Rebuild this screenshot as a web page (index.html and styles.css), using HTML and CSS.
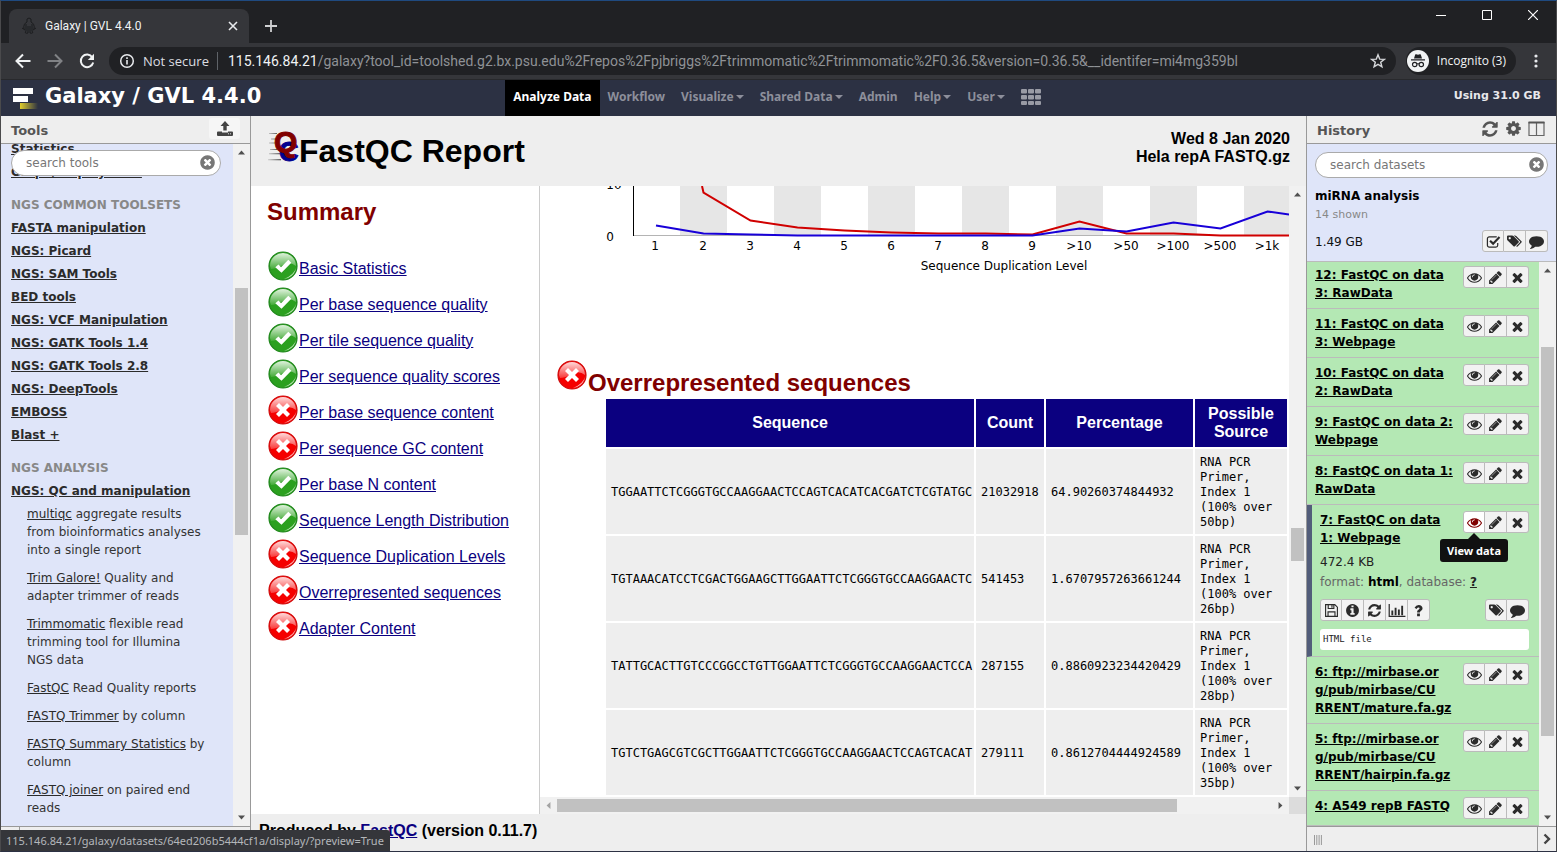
FILE: index.html
```html
<!DOCTYPE html>
<html lang="en">
<head>
<meta charset="utf-8">
<title>Galaxy | GVL 4.4.0</title>
<link rel="stylesheet" href="styles.css">
</head>
<body>
<svg class="sprite" aria-hidden="true">
  <symbol id="i-eye" viewBox="0 0 1792 1792"><path d="M1664 960q-152-236-381-353 61 104 61 225 0 185-131.5 316.5t-316.5 131.5-316.5-131.5-131.5-316.5q0-121 61-225-229 117-381 353 133 205 333.5 326.5t434.5 121.5 434.5-121.5 333.5-326.5zm-720-384q0-20-14-34t-34-14q-125 0-214.5 89.5t-89.5 214.5q0 20 14 34t34 14 34-14 14-34q0-86 61-147t147-61q20 0 34-14t14-34zm848 384q0 34-20 69-140 230-376.5 368.5t-499.5 138.5-499.5-139-376.5-368q-20-35-20-69t20-69q140-229 376.5-368t499.5-139 499.5 139 376.5 368q20 35 20 69z"/></symbol>
  <symbol id="i-pencil" viewBox="0 0 1792 1792"><path d="M491 1536l91-91-235-235-91 91v107h128v128h107zm523-928q0-22-22-22-10 0-17 7l-542 542q-7 7-7 17 0 22 22 22 10 0 17-7l542-542q7-7 7-17zm-54-192l416 416-832 832h-416v-416zm683 96q0 53-37 90l-166 166-416-416 166-165q36-38 90-38 53 0 91 38l235 234q37 39 37 91z"/></symbol>
  <symbol id="i-times" viewBox="0 0 1792 1792"><path d="M1490 1322q0 40-28 68l-136 136q-28 28-68 28t-68-28l-294-294-294 294q-28 28-68 28t-68-28l-136-136q-28-28-28-68t28-68l294-294-294-294q-28-28-28-68t28-68l136-136q28-28 68-28t68 28l294 294 294-294q28-28 68-28t68 28l136 136q28 28 28 68t-28 68l-294 294 294 294q28 28 28 68z"/></symbol>
  <symbol id="i-refresh" viewBox="0 0 1792 1792"><path d="M1639 1056q0 5-1 7-64 268-268 434.5t-478 166.5q-146 0-282.5-55t-243.5-157l-129 129q-19 19-45 19t-45-19-19-45v-448q0-26 19-45t45-19h448q26 0 45 19t19 45-19 45l-137 137q71 66 161 102t187 36q134 0 250-65t186-179q11-17 53-117 8-23 30-23h192q13 0 22.5 9.5t9.5 22.5zm25-800v448q0 26-19 45t-45 19h-448q-26 0-45-19t-19-45 19-45l138-138q-148-137-349-137-134 0-250 65t-186 179q-11 17-53 117-8 23-30 23h-199q-13 0-22.5-9.5t-9.5-22.5v-7q65-268 270-434.5t480-166.5q146 0 284 55.5t245 156.5l130-129q19-19 45-19t45 19 19 45z"/></symbol>
  <symbol id="i-cog" viewBox="0 0 1792 1792"><path d="M1152 896q0-106-75-181t-181-75-181 75-75 181 75 181 181 75 181-75 75-181zm512-109v222q0 12-8 23t-20 13l-185 28q-19 54-39 91 35 50 107 138 10 12 10 25t-9 23q-27 37-99 108t-94 71q-12 0-26-9l-138-108q-44 23-91 38-16 136-29 186-7 28-36 28h-222q-14 0-24.5-8.5t-11.5-21.5l-28-184q-49-16-90-37l-141 107q-10 9-25 9-14 0-25-11-126-114-165-168-7-10-7-23 0-12 8-23 15-21 51-66.5t54-70.5q-27-50-41-99l-183-27q-13-2-21-12.5t-8-23.5v-222q0-12 8-23t19-13l186-28q14-46 39-92-40-57-107-138-10-12-10-24 0-10 9-23 26-36 98.5-107.5t94.5-71.5q13 0 26 10l138 107q44-23 91-38 16-136 29-186 7-28 36-28h222q14 0 24.5 8.5t11.5 21.5l28 184q49 16 90 37l142-107q9-9 24-9 13 0 25 10 129 119 165 170 7 8 7 22 0 12-8 23-15 21-51 66.5t-54 70.5q26 50 41 98l183 28q13 2 21 12.5t8 23.5z"/></symbol>
  <symbol id="i-clear" viewBox="0 0 1792 1792"><path d="M1277 1122q0-26-19-45l-181-181 181-181q19-19 19-45 0-27-19-46l-90-90q-19-19-46-19-26 0-45 19l-181 181-181-181q-19-19-45-19-27 0-46 19l-90 90q-19 19-19 46 0 26 19 45l181 181-181 181q-19 19-19 45 0 27 19 46l90 90q19 19 46 19 26 0 45-19l181-181 181 181q19 19 45 19 27 0 46-19l90-90q19-19 19-46zm387-226q0 209-103 385.5t-279.5 279.5-385.5 103-385.5-103-279.5-279.5-103-385.5 103-385.5 279.5-279.5 385.5-103 385.5 103 279.5 279.5 103 385.5z"/></symbol>
  <symbol id="i-info" viewBox="0 0 1792 1792"><path d="M1152 1376v-160q0-14-9-23t-23-9h-96v-512q0-14-9-23t-23-9h-320q-14 0-23 9t-9 23v160q0 14 9 23t23 9h96v320h-96q-14 0-23 9t-9 23v160q0 14 9 23t23 9h448q14 0 23-9t9-23zm-128-896v-160q0-14-9-23t-23-9h-192q-14 0-23 9t-9 23v160q0 14 9 23t23 9h192q14 0 23-9t9-23zm640 416q0 209-103 385.5t-279.5 279.5-385.5 103-385.5-103-279.5-279.5-103-385.5 103-385.5 279.5-279.5 385.5-103 385.5 103 279.5 279.5 103 385.5z"/></symbol>
  <symbol id="i-comment" viewBox="0 0 1792 1792"><path d="M1792 896q0 174-120 321.5t-326 233-450 85.5q-70 0-145-8-198 175-460 242-49 14-114 22-17 2-30.5-9t-17.5-29v-1q-3-4-.5-12t2-10 4.5-9.5l6-9 7-8.5 8-9q7-8 31-34.5t34.5-38 31-39.5 32.5-51 27-59 26-76q-157-89-247.5-220t-90.5-281q0-174 120-321.5t326-233 450-85.5 450 85.5 326 233 120 321.5z"/></symbol>
  <symbol id="i-tags" viewBox="0 0 16 16"><path fill-rule="evenodd" d="M0 2.600Q0 1.500 1.100 1.500H5.500Q6.300 1.500 6.900 2.100L12.400 7.600Q13.100 8.300 12.400 9.100L8.400 13.100Q7.600 13.800 6.900 13.100L.7 6.900Q0 6.300 0 5.500zM2.900 3.200a1.200 1.200 0 1 0 .01 0z"/><path d="M7.300 1.500H8.400Q9.200 1.500 9.800 2.100L15.400 7.600Q16.100 8.300 15.400 9.100L11.300 13.200Q10.500 13.900 9.700 13L13.900 8.700Q14.300 8.300 13.900 7.900z"/></symbol>
  <symbol id="i-check" viewBox="0 0 16 16"><path d="M12.500 9.500V12a2 2 0 0 1-2 2H3.500a2 2 0 0 1-2-2V5a2 2 0 0 1 2-2h7q.6 0 1 .2" fill="none" stroke="currentColor" stroke-width="1.300"/><path d="M4.300 7.200L7.600 10.300L14.400 3.300" fill="none" stroke="currentColor" stroke-width="2.300"/></symbol>
  <symbol id="i-save" viewBox="0 0 16 16"><path d="M1.700 1.700H11.500L14.300 4.500V14.300H1.700zM4.300 14V9.500H11.700V14M4.500 2V5.900H10.500V2M8.500 2.500V5" fill="none" stroke="currentColor" stroke-width="1.200"/></symbol>
  <symbol id="i-chart" viewBox="0 0 18 16"><path d="M.7 1V14.300H18" fill="none" stroke="currentColor" stroke-width="1.300"/><path d="M3 8h2v5H3zM6.500 5h2v8h-2zM10 7h2v6h-2zM13.500 3h2v10h-2z"/></symbol>
  <symbol id="i-q" viewBox="0 0 16 16"><path d="M3.800 5Q5.200 2.200 8.200 2.200C10.600 2.200 12.300 3.700 12.300 5.700C12.300 7.300 11.400 8 10.200 8.700Q9.500 9.200 9.500 10H6.500C6.500 8.300 7.300 7.500 8.300 6.900C9.500 6.200 9.500 5 8.200 4.900C7.300 4.900 6.700 5.400 5.900 6.400zM6.500 11.300h3v2.800h-3z"/></symbol>
  <symbol id="i-up" viewBox="0 0 9 5"><path d="M0 5L4.500 0L9 5z"/></symbol>
  <symbol id="i-down" viewBox="0 0 9 5"><path d="M0 0L4.500 5L9 0z"/></symbol>
  <symbol id="i-left" viewBox="0 0 5 9"><path d="M5 0L0 4.500L5 9z"/></symbol>
  <symbol id="i-right" viewBox="0 0 5 9"><path d="M0 0L5 4.500L0 9z"/></symbol>
  <linearGradient id="g-ok" x1="0" y1="0" x2="0" y2="1"><stop offset="0" stop-color="#dff2dc"/><stop offset="1" stop-color="#45ab39"/></linearGradient>
  <linearGradient id="g-bad" x1="0" y1="0" x2="0" y2="1"><stop offset="0" stop-color="#ffd9d9"/><stop offset="1" stop-color="#f83a3a"/></linearGradient>
  <linearGradient id="g-logo"><stop offset="0" stop-color="#e0cd2c"/><stop offset="1" stop-color="#2c3143"/></linearGradient>
  <linearGradient id="g-speed" gradientUnits="userSpaceOnUse" x1="1" y1="0" x2="14" y2="0"><stop offset="0" stop-color="#ccc"/><stop offset="1" stop-color="#333"/></linearGradient>
  <symbol id="i-ok" viewBox="0 0 30 30"><circle cx="15" cy="15" r="14" fill="#2ba01f" stroke="#1f861b" stroke-width="1.200"/><path d="M2 15A13 13 0 0 1 28 15Q22 10 15 14Q8 18 3 18z" fill="url(#g-ok)"/><path d="M20 27Q27 24 28 17Q26 24 16 28z" fill="#b9e5b3"/><path d="M7.300 16.200L10.500 13.500L13 16.300L20.300 8.700L23.300 11.700L13.500 21.700z" fill="#fff"/></symbol>
  <symbol id="i-bad" viewBox="0 0 30 30"><circle cx="15" cy="15" r="14" fill="#f50000" stroke="#cf0b0b" stroke-width="1.200"/><path d="M2 15A13 13 0 0 1 28 15Q22 10 15 14Q8 18 3 18z" fill="url(#g-bad)"/><path d="M20 27Q27 24 28 17Q26 24 16 28z" fill="#ffb5b5"/><path d="M8 11L11 8L15 12L19 8L22 11L18 15L22 19L19 22L15 18L11 22L8 19L12 15z" fill="#fff"/></symbol>
</svg>

<div class="window">
  <div class="tabstrip">
    <div class="tab">
      <svg class="favicon" viewBox="0 0 16 18"><path d="M6 5Q5 1 8 1Q11 1 10 5M6 5Q2 7 3 12M10 5Q14 7 13 12M5 7V14M11 7V14M5 14Q3 17 7 16V9M11 14Q13 17 9 16V9M1 11L4 13M15 11L12 13" fill="none" stroke="#1b1c1e" stroke-width="1"/></svg>
      <span class="tab-title">Galaxy | GVL 4.4.0</span>
      <button class="plain" aria-label="Close tab"><svg width="10" height="10" viewBox="0 0 10 10"><path d="M1 1L9 9M9 1L1 9" stroke="#e8eaed" stroke-width="1.600"/></svg></button>
    </div>
    <button class="plain newtab" aria-label="New tab"><svg width="12" height="12" viewBox="0 0 12 12"><path d="M6 0V12M0 6H12" stroke="#cfd0d2" stroke-width="1.800"/></svg></button>
    <div class="winbtns">
      <button class="plain" aria-label="Minimize"><svg width="10" height="10" viewBox="0 0 10 10"><path d="M0 5.500H10" stroke="#fff"/></svg></button>
      <button class="plain" aria-label="Maximize"><svg width="10" height="10" viewBox="0 0 10 10"><path d="M.5 .5H9.500V9.500H.5z" fill="none" stroke="#fff"/></svg></button>
      <button class="plain" aria-label="Close"><svg width="10" height="10" viewBox="0 0 10 10"><path d="M0 0L10 10M10 0L0 10" stroke="#fff" stroke-width="1.200"/></svg></button>
    </div>
  </div>
  <div class="toolbar">
    <div class="navbtns">
      <button class="plain" aria-label="Back"><svg width="16" height="16" viewBox="0 0 16 16"><path d="M15.500 8H2.500M8 1.500L1.500 8L8 14.500" fill="none" stroke="#f1f3f4" stroke-width="2"/></svg></button>
      <button class="plain" aria-label="Forward"><svg width="16" height="16" viewBox="0 0 16 16"><path d="M.5 8H13.500M8 1.500L14.500 8L8 14.500" fill="none" stroke="#808285" stroke-width="2"/></svg></button>
      <button class="plain" aria-label="Reload"><svg width="16" height="16" viewBox="0 0 16 16"><path d="M13.300 4.300A6.300 6.300 0 1 0 14.200 9.500" fill="none" stroke="#f1f3f4" stroke-width="2"/><path d="M15 .8V7H8.800z" fill="#f1f3f4"/></svg></button>
    </div>
    <div class="address">
      <svg width="16" height="16" viewBox="0 0 16 16"><circle cx="8" cy="8" r="6.300" fill="none" stroke="#e8eaed" stroke-width="1.500"/><path d="M7.200 7h1.600v4.500H7.200zM7.200 4.300h1.600v1.600H7.200z" fill="#e8eaed"/></svg>
      <span class="notsecure">Not secure</span>
      <span class="url"><b>115.146.84.21</b>/galaxy?tool_id=toolshed.g2.bx.psu.edu%2Frepos%2Fpjbriggs%2Ftrimmomatic%2Ftrimmomatic%2F0.36.5&amp;version=0.36.5&amp;__identifer=mi4mg359bl</span>
      <button class="plain star" aria-label="Bookmark this page"><svg width="16" height="16" viewBox="0 0 16 16"><path d="M8 1.800L9.700 6.100L14.300 6.400L10.700 9.300L11.900 13.800L8 11.300L4.100 13.800L5.300 9.300L1.700 6.400L6.300 6.100z" fill="none" stroke="#d5d7da" stroke-width="1.400"/></svg></button>
    </div>
    <div class="incognito">
      <svg width="22" height="22" viewBox="0 0 22 22"><circle cx="11" cy="11" r="11" fill="#f1f3f4"/><path d="M7 8.500L8.200 4.600Q8.500 4 9.200 4.200L11 4.700L12.800 4.200Q13.500 4 13.800 4.600L15 8.500zM4 9.300H18V10.600H4z" fill="#202124"/><circle cx="7.700" cy="14.500" r="2.200" fill="none" stroke="#202124" stroke-width="1.200"/><circle cx="14.300" cy="14.500" r="2.200" fill="none" stroke="#202124" stroke-width="1.200"/><path d="M10 14Q11 13.300 12 14" fill="none" stroke="#202124"/></svg>
      <span>Incognito (3)</span>
    </div>
    <button class="plain menu" aria-label="Menu"><svg width="4" height="14" viewBox="0 0 4 14"><circle cx="2" cy="2" r="1.600" fill="#e8eaed"/><circle cx="2" cy="7" r="1.600" fill="#e8eaed"/><circle cx="2" cy="12" r="1.600" fill="#e8eaed"/></svg></button>
  </div>

  <header class="masthead">
    <a class="brand" href="#"><svg width="25" height="21" viewBox="0 0 25 21"><path d="M0 0H20V6H0zM0 8H15V14H0z" fill="#fff"/><path d="M7 15H25V21H7z" fill="url(#g-logo)"/></svg><span>Galaxy / GVL 4.4.0</span></a>
    <nav class="mainnav">
      <a class="active" href="#">Analyze Data</a>
      <a href="#">Workflow</a>
      <a class="drop" href="#">Visualize</a>
      <a class="drop" href="#">Shared Data</a>
      <a href="#">Admin</a>
      <a class="drop" href="#">Help</a>
      <a class="drop" href="#">User</a>
      <a href="#" aria-label="Applications"><svg width="20" height="16" viewBox="0 0 20 16"><path d="M1 0H5Q6 0 6 1V3.500Q6 4.500 5 4.500H1Q0 4.500 0 3.500V1Q0 0 1 0zM8 0H12Q13 0 13 1V3.500Q13 4.500 12 4.500H8Q7 4.500 7 3.500V1Q7 0 8 0zM15 0H19Q20 0 20 1V3.500Q20 4.500 19 4.500H15Q14 4.500 14 3.500V1Q14 0 15 0zM1 6H5Q6 6 6 7V9.500Q6 10.500 5 10.500H1Q0 10.500 0 9.500V7Q0 6 1 6zM8 6H12Q13 6 13 7V9.500Q13 10.500 12 10.500H8Q7 10.500 7 9.500V7Q7 6 8 6zM15 6H19Q20 6 20 7V9.500Q20 10.500 19 10.500H15Q14 10.500 14 9.500V7Q14 6 15 6zM1 12H5Q6 12 6 13V15Q6 16 5 16H1Q0 16 0 15V13Q0 12 1 12zM8 12H12Q13 12 13 13V15Q13 16 12 16H8Q7 16 7 15V13Q7 12 8 12zM15 12H19Q20 12 20 13V15Q20 16 19 16H15Q14 16 14 15V13Q14 12 15 12z" fill="#999ba5"/></svg></a>
    </nav>
    <div class="quota">Using 31.0 GB</div>
  </header>

  <div class="columns">
    <aside class="panel tools">
      <div class="panel-head"><h2>Tools</h2><button class="upload" aria-label="Upload data"><svg width="16" height="15" viewBox="0 0 16 15"><path d="M8 0L12.500 5H9.700V9.500H6.300V5H3.500zM1 10.500H5V11.500H11V10.500H15Q16 10.500 16 11.500V14Q16 15 15 15H1Q0 15 0 14V11.500Q0 10.500 1 10.500z" fill="#444"/><path d="M11 12.800h1M13 12.800h1" stroke="#ddd"/></svg></button></div>
      <div class="panel-body">
        <div class="tool-scroll">
          <div class="tool-list">
            <a class="cat" href="#">Statistics</a>
            <a class="cat" href="#">Graph/Display Data</a>
            <h3>NGS COMMON TOOLSETS</h3>
            <a class="cat" href="#">FASTA manipulation</a>
            <a class="cat" href="#">NGS: Picard</a>
            <a class="cat" href="#">NGS: SAM Tools</a>
            <a class="cat" href="#">BED tools</a>
            <a class="cat" href="#">NGS: VCF Manipulation</a>
            <a class="cat" href="#">NGS: GATK Tools 1.4</a>
            <a class="cat" href="#">NGS: GATK Tools 2.8</a>
            <a class="cat" href="#">NGS: DeepTools</a>
            <a class="cat" href="#">EMBOSS</a>
            <a class="cat" href="#">Blast +</a>
            <h3>NGS ANALYSIS</h3>
            <a class="cat" href="#">NGS: QC and manipulation</a>
            <div class="subtools">
              <p><a href="#">multiqc</a> aggregate results from bioinformatics analyses into a single report</p>
              <p><a href="#">Trim Galore!</a> Quality and adapter trimmer of reads</p>
              <p><a href="#">Trimmomatic</a> flexible read trimming tool for Illumina NGS data</p>
              <p><a href="#">FastQC</a> Read Quality reports</p>
              <p><a href="#">FASTQ Trimmer</a> by column</p>
              <p><a href="#">FASTQ Summary Statistics</a> by column</p>
              <p><a href="#">FASTQ joiner</a> on paired end reads</p>
            </div>
          </div>
        </div>
        <label class="search search-tools"><input type="text" placeholder="search tools" aria-label="search tools"><svg><use href="#i-clear"/></svg></label>
        <div class="sbar"><svg class="av"><use href="#i-up"/></svg><div class="track"><div class="thumb" style="top:19.6%;height:38.1%"></div></div><svg class="av"><use href="#i-down"/></svg></div>
      </div>
      <div class="panel-foot"><span class="foot-cell"></span></div>
    </aside>

    <main class="report">
      <header class="report-head">
        <svg class="qc" width="34" height="36" viewBox="0 0 34 36"><path d="M2 4h8v1H2zM4 9.500h5v1H4zM2 13.500h6v1H2zM3 20h7v1H3zM2 24.300h11v1H2zM1 30.300h13v1H1z" fill="url(#g-speed)"/><text x="12" y="32" class="qc-c">C</text><text x="7" y="23" class="qc-q">Q</text></svg>
        <h1>FastQC Report</h1>
        <div class="report-date">Wed 8 Jan 2020<br>Hela repA FASTQ.gz</div>
      </header>
      <div class="report-mid">
        <section class="summary">
          <h2>Summary</h2>
          <ul>
            <li><svg><use href="#i-ok"/></svg><a href="#">Basic Statistics</a></li>
            <li><svg><use href="#i-ok"/></svg><a href="#">Per base sequence quality</a></li>
            <li><svg><use href="#i-ok"/></svg><a href="#">Per tile sequence quality</a></li>
            <li><svg><use href="#i-ok"/></svg><a href="#">Per sequence quality scores</a></li>
            <li><svg><use href="#i-bad"/></svg><a href="#">Per base sequence content</a></li>
            <li><svg><use href="#i-bad"/></svg><a href="#">Per sequence GC content</a></li>
            <li><svg><use href="#i-ok"/></svg><a href="#">Per base N content</a></li>
            <li><svg><use href="#i-ok"/></svg><a href="#">Sequence Length Distribution</a></li>
            <li><svg><use href="#i-bad"/></svg><a href="#">Sequence Duplication Levels</a></li>
            <li><svg><use href="#i-bad"/></svg><a href="#">Overrepresented sequences</a></li>
            <li><svg><use href="#i-bad"/></svg><a href="#">Adapter Content</a></li>
          </ul>
        </section>
        <section class="modules">
          <div class="modules-view">
            <svg class="chart" width="749" height="94" viewBox="540 186 749 94">
              <path d="M680 186h47v50h-47zM774 186h47v50h-47zM868 186h47v50h-47zM962 186h47v50h-47zM1056 186h47v50h-47zM1150 186h47v50h-47zM1244 186h47v50h-47z" fill="#e6e6e6"/>
              <path d="M633.500 235.500H1289" stroke="#b4b4b4"/><path d="M633.500 186V236" stroke="#000"/>
              <path d="M702 186L703.500 192.500L750.500 220.500L797.500 227.500L844.500 230.500L891.500 232.500L938.500 233.500H985.500L1032.500 234.500L1079.500 221.500L1126.500 233.500H1173.500L1220.500 235.500H1289" class="line red"/>
              <path d="M656 225.500L703.500 233.500L750.500 234.500L797.500 235.500H1032.500L1079.500 228.500L1126.500 231.500L1173.500 222.500L1220.500 228.500L1267.500 211.500L1289 214.500" class="line blue"/>
              <g class="labels">
                <text x="614" y="189">10</text><text x="610" y="241">0</text>
                <text x="655" y="250">1</text><text x="703" y="250">2</text><text x="750" y="250">3</text><text x="797" y="250">4</text><text x="844" y="250">5</text><text x="891" y="250">6</text><text x="938" y="250">7</text><text x="985" y="250">8</text><text x="1032" y="250">9</text><text x="1079" y="250">&gt;10</text><text x="1126" y="250">&gt;50</text><text x="1173" y="250">&gt;100</text><text x="1220" y="250">&gt;500</text><text x="1267" y="250">&gt;1k</text>
                <text x="1004" y="270">Sequence Duplication Level</text>
              </g>
            </svg>
            <h2><svg><use href="#i-bad"/></svg><span>Overrepresented sequences</span></h2>
            <table>
              <colgroup><col class="c-seq"><col class="c-count"><col class="c-pct"><col class="c-src"></colgroup>
              <thead><tr><th>Sequence</th><th>Count</th><th>Percentage</th><th>Possible Source</th></tr></thead>
              <tbody>
                <tr><td>TGGAATTCTCGGGTGCCAAGGAACTCCAGTCACATCACGATCTCGTATGC</td><td>21032918</td><td>64.90260374844932</td><td>RNA PCR Primer, Index 1 (100% over 50bp)</td></tr>
                <tr><td>TGTAAACATCCTCGACTGGAAGCTTGGAATTCTCGGGTGCCAAGGAACTC</td><td>541453</td><td>1.6707957263661244</td><td>RNA PCR Primer, Index 1 (100% over 26bp)</td></tr>
                <tr><td>TATTGCACTTGTCCCGGCCTGTTGGAATTCTCGGGTGCCAAGGAACTCCA</td><td>287155</td><td>0.8860923234420429</td><td>RNA PCR Primer, Index 1 (100% over 28bp)</td></tr>
                <tr><td>TGTCTGAGCGTCGCTTGGAATTCTCGGGTGCCAAGGAACTCCAGTCACAT</td><td>279111</td><td>0.8612704444924589</td><td>RNA PCR Primer, Index 1 (100% over 35bp)</td></tr>
              </tbody>
            </table>
          </div>
          <div class="sbar"><svg class="av"><use href="#i-up"/></svg><div class="track"><div class="thumb" style="top:56.3%;height:5.8%"></div></div><svg class="av"><use href="#i-down"/></svg></div>
          <div class="sbar horiz"><svg class="ah dim"><use href="#i-left"/></svg><div class="track"><div class="thumb" style="left:0%;width:86.7%"></div></div><svg class="ah"><use href="#i-right"/></svg></div>
          <div class="corner"></div>
        </section>
      </div>
      <footer class="report-foot">Produced by <a href="#">FastQC</a> (version 0.11.7)</footer>
    </main>

    <aside class="panel history">
      <div class="panel-head"><h2>History</h2><div class="head-icons">
        <button class="plain" aria-label="Refresh history"><svg width="18" height="18"><use href="#i-refresh"/></svg></button>
        <button class="plain" aria-label="History options"><svg width="17" height="17"><use href="#i-cog"/></svg></button>
        <button class="plain" aria-label="View all histories"><svg width="17" height="16" viewBox="0 0 17 16"><path d="M1 1.500H16V14.500H1zM8.500 2V14" fill="none" stroke="#666" stroke-width="1.200"/><path d="M.5 1.500H16.500" stroke="#555" stroke-width="2"/></svg></button></div></div>
      <div class="history-info">
        <label class="search"><input type="text" placeholder="search datasets" aria-label="search datasets"><svg><use href="#i-clear"/></svg></label>
        <h3>miRNA analysis</h3>
        <p class="shown">14 shown</p>
        <div class="size-row"><span>1.49 GB</span><div class="btns"><button aria-label="Select datasets"><svg><use href="#i-check"/></svg></button><button aria-label="Edit tags"><svg><use href="#i-tags"/></svg></button><button aria-label="Edit annotation"><svg><use href="#i-comment"/></svg></button></div></div>
      </div>
      <div class="panel-body">
        <div class="datasets">
          <div class="datasets-list">
            <article><a href="#">12: FastQC on data 3: RawData</a><div class="btns"><button aria-label="View data"><svg><use href="#i-eye"/></svg></button><button aria-label="Edit attributes"><svg><use href="#i-pencil"/></svg></button><button aria-label="Delete"><svg><use href="#i-times"/></svg></button></div></article>
            <article><a href="#">11: FastQC on data 3: Webpage</a><div class="btns"><button aria-label="View data"><svg><use href="#i-eye"/></svg></button><button aria-label="Edit attributes"><svg><use href="#i-pencil"/></svg></button><button aria-label="Delete"><svg><use href="#i-times"/></svg></button></div></article>
            <article><a href="#">10: FastQC on data 2: RawData</a><div class="btns"><button aria-label="View data"><svg><use href="#i-eye"/></svg></button><button aria-label="Edit attributes"><svg><use href="#i-pencil"/></svg></button><button aria-label="Delete"><svg><use href="#i-times"/></svg></button></div></article>
            <article><a href="#">9: FastQC on data 2: Webpage</a><div class="btns"><button aria-label="View data"><svg><use href="#i-eye"/></svg></button><button aria-label="Edit attributes"><svg><use href="#i-pencil"/></svg></button><button aria-label="Delete"><svg><use href="#i-times"/></svg></button></div></article>
            <article><a href="#">8: FastQC on data 1: RawData</a><div class="btns"><button aria-label="View data"><svg><use href="#i-eye"/></svg></button><button aria-label="Edit attributes"><svg><use href="#i-pencil"/></svg></button><button aria-label="Delete"><svg><use href="#i-times"/></svg></button></div></article>
            <article class="open"><a href="#">7: FastQC on data 1: Webpage</a><div class="btns"><button class="hot" aria-label="View data"><svg><use href="#i-eye"/></svg><span class="tip">View data</span></button><button aria-label="Edit attributes"><svg><use href="#i-pencil"/></svg></button><button aria-label="Delete"><svg><use href="#i-times"/></svg></button></div>
              <div class="details">
                <p class="kb">472.4 KB</p>
                <p class="fmt">format: <b>html</b>, database: <a href="#">?</a></p>
                <div class="actions"><div class="btns"><button aria-label="Download"><svg><use href="#i-save"/></svg></button><button aria-label="View details"><svg><use href="#i-info"/></svg></button><button aria-label="Run this job again"><svg><use href="#i-refresh"/></svg></button><button aria-label="Visualize"><svg class="wide"><use href="#i-chart"/></svg></button><button aria-label="Help"><svg><use href="#i-q"/></svg></button></div><div class="btns"><button aria-label="Edit tags"><svg><use href="#i-tags"/></svg></button><button aria-label="Edit annotation"><svg><use href="#i-comment"/></svg></button></div></div>
                <pre>HTML file</pre>
              </div>
            </article>
            <article><a href="#">6: ftp://mirbase.or<wbr>g/pub/mirbase/CU<wbr>RRENT/mature.fa.gz</a><div class="btns"><button aria-label="View data"><svg><use href="#i-eye"/></svg></button><button aria-label="Edit attributes"><svg><use href="#i-pencil"/></svg></button><button aria-label="Delete"><svg><use href="#i-times"/></svg></button></div></article>
            <article><a href="#">5: ftp://mirbase.or<wbr>g/pub/mirbase/CU<wbr>RRENT/hairpin.fa.gz</a><div class="btns"><button aria-label="View data"><svg><use href="#i-eye"/></svg></button><button aria-label="Edit attributes"><svg><use href="#i-pencil"/></svg></button><button aria-label="Delete"><svg><use href="#i-times"/></svg></button></div></article>
            <article><a href="#">4: A549 repB FASTQ</a><div class="btns"><button aria-label="View data"><svg><use href="#i-eye"/></svg></button><button aria-label="Edit attributes"><svg><use href="#i-pencil"/></svg></button><button aria-label="Delete"><svg><use href="#i-times"/></svg></button></div></article>
          </div>
        </div>
        <div class="sbar"><svg class="av"><use href="#i-up"/></svg><div class="track"><div class="thumb" style="top:12.8%;height:73.4%"></div></div><svg class="av"><use href="#i-down"/></svg></div>
      </div>
      <div class="panel-foot"><svg class="grip" width="8" height="10" viewBox="0 0 8 10"><path d="M.5 0V10M2.800 0V10M5.100 0V10M7.400 0V10" stroke="#999"/></svg><button class="collapse" aria-label="Collapse panel"><svg width="8" height="12" viewBox="0 0 8 12"><path d="M1.500 1.500L6 6L1.500 10.500" fill="none" stroke="#444" stroke-width="2.400"/></svg></button></div>
    </aside>
  </div>
  <div class="status">115.146.84.21/galaxy/datasets/64ed206b5444cf1a/display/?preview=True</div>
</div>
</body>
</html>
```

FILE: styles.css
```css
* { box-sizing: border-box; }
body { margin: 0; font: 12px/18px "DejaVu Sans", Verdana, sans-serif; color: #333; }
h1, h2, h3, p, ul, pre { margin: 0; padding: 0; }
ul { list-style: none; }
button { font: inherit; color: inherit; padding: 0; cursor: pointer; }
svg { display: block; fill: currentColor; }
.sprite { position: absolute; width: 0; height: 0; }
.plain { display: grid; place-items: center; border: 0; background: none; }

.window { position: relative; display: flex; flex-direction: column; height: 100vh; overflow: hidden; border: 1px solid #4a4a4c; border-top-color: #1f4a80; border-bottom-color: #2c3143; background: #35363a; }

/* browser chrome */
.tabstrip { display: flex; height: 42px; flex: none; padding: 8px 0 0 8px; background: #202124; }
.tab { display: flex; align-items: center; width: 240px; padding: 0 11px 0 12px; border-radius: 8px 8px 0 0; background: #35363a; }
.favicon { width: 16px; height: 18px; margin-right: 8px; }
.tab-title { flex: 1; font: 12px/16px Roboto, sans-serif; color: #f1f3f4; }
.newtab { width: 44px; }
.winbtns { display: flex; align-items: flex-start; margin-left: auto; }
.winbtns button { width: 46px; height: 12px; }
.toolbar { display: flex; align-items: center; height: 37px; flex: none; border-bottom: 1px solid #28292c; font: 12px/16px "Open Sans", sans-serif; color: #f1f3f4; }
.navbtns { display: flex; gap: 16px; padding: 0 14px; }
.address { display: flex; flex: 1; align-items: center; min-width: 0; height: 28px; padding: 0 10px; border-radius: 14px; background: #202124; font-size: 14px; line-height: 18px; white-space: nowrap; }
.notsecure { margin-left: 8px; padding-right: 8px; border-right: 1px solid #5f6368; color: #dcdee1; font-size: 13px; }
.url { flex: 1; margin-left: 10px; overflow: hidden; color: #8f9296; font: 14px/18px Roboto, sans-serif; }
.url b { font-weight: 400; color: #f1f3f4; }
.incognito { display: flex; align-items: center; gap: 8px; height: 28px; margin-left: 10px; padding: 0 10px 0 1px; border-radius: 14px; background: #202124; white-space: nowrap; }
.menu { width: 40px; height: 28px; }

/* masthead */
.masthead { display: flex; align-items: stretch; height: 36px; flex: none; background: #2c3143; }
.brand { display: flex; flex: 1; align-items: center; gap: 7px; padding: 0 0 4px 12px; color: #fff; font-size: 21px; font-weight: 700; text-decoration: none; white-space: nowrap; }
.brand svg { margin-top: 4px; }
.mainnav { display: flex; font: bold 12px/18px "Noto Sans", sans-serif; }
.mainnav a { display: flex; align-items: center; padding: 0 8px 2px; color: #8d8f9b; text-decoration: none; white-space: nowrap; }
.mainnav .active { background: #000; color: #fff; }
.drop::after { content: ""; margin-left: 2px; border: 4px solid transparent; border-top-color: #8d8f9b; border-bottom: 0; }
.quota { flex: 1; padding: 7px 15px 0 0; text-align: right; color: #e8e8ec; font-size: 11px; font-weight: 700; }

/* panels */
.columns { display: flex; flex: 1; min-height: 0; }
.panel { display: flex; flex: none; flex-direction: column; width: 250px; background: #dfe5f9; }
.tools { border-right: 1px solid #999; }
.history { border-left: 1px solid #999; }
.panel-head { display: flex; flex: none; align-items: center; height: 28px; padding-left: 10px; border-bottom: 1px solid #999; background: #eee; color: #555; }
.panel-head h2 { flex: 1; padding-top: 2px; font-size: 13px; line-height: 18px; }
.upload { display: grid; place-items: center; width: 31px; height: 21px; margin: 0 10px 3px 0; border: 0; border-radius: 3px; background: #f6f6f6; }
.head-icons { display: flex; align-items: center; gap: 6px; padding: 0 11px 2px 0; }
.panel-body { position: relative; display: flex; flex: 1; min-height: 0; }
.panel-foot { display: flex; flex: none; height: 25px; border-top: 1px solid #999; background: #eee; }
.foot-cell { width: 19px; border-right: 1px solid #999; }
.grip { margin: 8px auto 0 7px; }
.collapse { display: grid; place-items: center; width: 19px; border: 0; border-left: 1px solid #999; background: none; }

.search { position: relative; display: block; }
.search input { display: block; width: 100%; height: 26px; padding: 0 24px 0 14px; border: 1px solid #aaa; border-radius: 13px; background: #fff; color: #333; font: 12px/18px "DejaVu Sans", Verdana, sans-serif; outline: 0; }
.search input::placeholder { color: #777; opacity: 1; }
.search svg { position: absolute; top: 4px; right: 3px; width: 17px; height: 17px; color: #777; }
.search-tools { position: absolute; top: 6px; left: 10px; right: 29px; }
.search-tools svg { right: 5px; }

.tool-scroll { flex: 1; min-width: 0; overflow: hidden; }
.tool-list { margin-top: -6px; padding: 0 18px 0 10px; }
.tool-list a { color: #2b2b2b; }
.tool-list h3 { margin: 12px 0 3px; color: #888; font-size: 12px; line-height: 18px; }
.cat { display: block; font-weight: 700; line-height: 23px; }
.subtools { padding: 2px 8px 0 16px; }
.subtools p { margin-bottom: 10px; }

/* scroll bars */
.sbar { display: flex; flex: none; flex-direction: column; align-items: center; width: 17px; background: #f1f1f1; color: #505050; }
.av { width: 17px; height: 17px; padding: 6px 5px; }
.ah { width: 17px; height: 17px; padding: 5px 6px; }
.dim { color: #a3a3a3; }
.track { position: relative; flex: 1; align-self: stretch; }
.thumb { position: absolute; left: 2px; right: 2px; background: #c1c1c1; }
.horiz { flex-direction: row; width: auto; height: 17px; }
.horiz .thumb { top: 2px; bottom: 2px; right: auto; }
.corner { background: #dcdcdc; }

/* report */
.report { display: flex; flex: 1; flex-direction: column; min-width: 0; background: #fff; color: #000; font: 16px/18px "Liberation Sans", Arial, sans-serif; }
.report a { color: #0b0080; }
.report-head { display: flex; flex: none; height: 70px; padding: 0 16px; background: #eee; }
.qc { margin-top: 13px; margin-right: -2px; overflow: visible; }
.qc-q, .qc-c { font: bold 30px "Liberation Sans", Arial, sans-serif; stroke-width: 1; }
.qc-q { fill: #800000; stroke: #800000; }
.qc-c { fill: #000090; stroke: #000090; font-size: 27px; }
.report-head h1 { flex: 1; font-size: 32px; line-height: 36px; padding-top: 17px; }
.report-date { padding-top: 14px; font-weight: 700; text-align: right; }
.report-mid { display: flex; flex: 1; min-height: 0; }
.summary { flex: none; width: 289px; padding: 12px 0 0 16px; border-right: 1px solid #ccc; }
.summary h2, .modules h2 { color: #800000; font-size: 24px; line-height: 28px; }
.summary ul { margin-top: 22px; }
.summary li { display: flex; align-items: center; height: 36px; }
.summary li svg, .modules h2 svg { flex: none; width: 32px; height: 30px; }
.summary li a { padding-top: 6px; }
.modules { display: grid; flex: 1; grid-template: minmax(0, 1fr) 17px / minmax(0, 1fr) 17px; min-width: 0; }
.modules-view { overflow: hidden; }
.line { fill: none; stroke-width: 2; }
.red { stroke: #d00000; }
.blue { stroke: #1800d8; }
.labels { fill: #000; font: 12px "DejaVu Sans", sans-serif; text-anchor: middle; }
.modules h2 { display: flex; height: 37px; margin: 80px 0 0 16px; }
.modules h2 span { padding-top: 9px; }
.modules table { width: 685px; margin-left: 64px; border-spacing: 2px; table-layout: fixed; }
.c-seq { width: 368px; }
.c-count { width: 68px; }
.c-pct { width: 147px; }
.c-src { width: 92px; }
.modules th { padding: 6px; background: #0b0080; color: #fff; }
.modules td { padding: 6px 0 4px 5px; background: #eee; font: 12px/15px "DejaVu Sans Mono", monospace; }
.report-foot { flex: none; height: 37px; padding: 8px; background: #eee; font-weight: 700; }

/* history */
.history-info { flex: none; height: 118px; padding: 8px; border-bottom: 1px solid #bbb; color: #111; }
.history-info h3 { margin-top: 9px; font-size: 12px; line-height: 18px; color: #000; }
.shown { margin-top: 1px; color: #888; font-size: 11px; }
.size-row { display: flex; align-items: center; justify-content: space-between; height: 22px; margin-top: 6px; }
.size-row span { padding-top: 2px; }
.btns { display: flex; flex: none; height: 22px; }
.btns button { position: relative; display: grid; place-items: center; width: 22px; height: 22px; border: 1px solid #bbb; border-left: 0; background: #f2f2f2; color: #2b2b2b; }
.btns button:first-child { border-left: 1px solid #bbb; border-radius: 3px 0 0 3px; }
.btns button:last-child { border-radius: 0 3px 3px 0; }
.btns svg { width: 15px; height: 15px; }
.btns .wide { width: 18px; }
.datasets { flex: 1; min-width: 0; overflow: hidden; }
.datasets-list { margin-top: -2px; }
article { display: flex; flex-wrap: wrap; align-items: flex-start; justify-content: space-between; padding: 6px 10px 6px 8px; border-bottom: 1px solid #bbb; background: #b4e8b4; }
article > a { width: 142px; color: #000; font-weight: 700; }
.open { padding-left: 8px; border-left: 5px solid #525d7a; }
.open > a { width: 137px; }
.btns .hot { background: #fff; color: #800000; }
.tip { position: absolute; top: 27px; left: 50%; z-index: 2; width: 68px; margin-left: -34px; padding: 2px 0; border-radius: 3px; background: #111; color: #fff; font: bold 11px/19px "Noto Sans", sans-serif; }
.tip::before { content: ""; position: absolute; bottom: 100%; left: 50%; margin-left: -6px; border: 6px solid transparent; border-top: 0; border-bottom-color: #111; }
.details { width: 100%; }
.kb { margin-top: 6px; color: #222; }
.fmt { margin-top: 2px; color: #666; white-space: nowrap; }
.fmt b { color: #000; }
.fmt a { color: #222; font-weight: 700; }
.actions { display: flex; justify-content: space-between; margin-top: 8px; }
.details pre { height: 21px; margin-top: 8px; padding: 0 3px; border-radius: 3px; background: #fff; color: #222; font: 9px/20px "DejaVu Sans Mono", monospace; }

.status { position: absolute; left: 0; bottom: 0; padding: 2px 6px 2px 5px; border-radius: 0 3px 0 0; background: #35363a; color: #b4b7ba; font: 11px/17px "Noto Sans", sans-serif; }
```
